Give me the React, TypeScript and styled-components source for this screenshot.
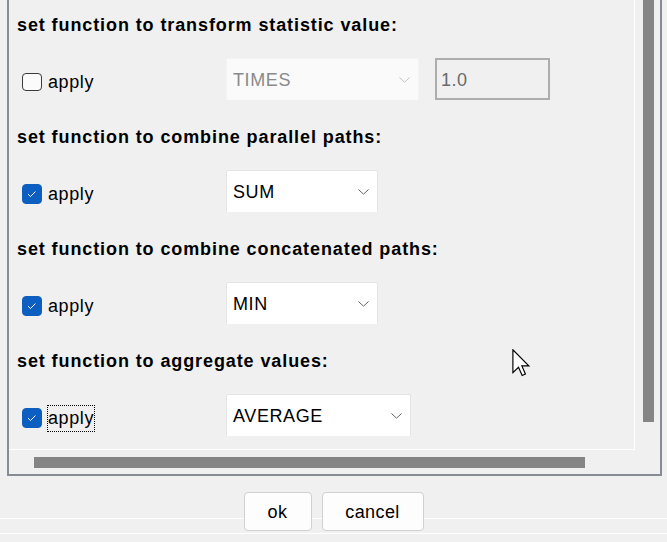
import React from "react";
import styled, { createGlobalStyle } from "styled-components";

const Global = createGlobalStyle`
  html, body { margin: 0; padding: 0; background: #f0f0f0; }
  body { font-family: "Liberation Sans", Arial, sans-serif; overflow: hidden; }
  * { box-sizing: border-box; }
`;

const Page = styled.div`
  width: 667px;
  height: 542px;
  display: flex;
  flex-direction: column;
  background: #f0f0f0;
  position: relative;
`;

const ScrollBox = styled.div`
  margin: 0 5px 0 7px;
  height: 476px;
  border: 2px solid #878b94;
  border-top: none;
  display: grid;
  grid-template-columns: 626px 25px;
  grid-template-rows: 450px 24px;
`;

const Viewport = styled.div`
  border-right: 1px solid #ffffff;
  border-bottom: 1px solid #ffffff;
  padding: 14px 0 0 8px;
  display: flex;
  flex-direction: column;
  gap: 26px;
  overflow: hidden;
`;

const Section = styled.div`
  display: flex;
  flex-direction: column;
  gap: 22px;
`;

const Title = styled.div`
  font-weight: bold;
  font-size: 18px;
  line-height: 22px;
  letter-spacing: 0.9px;
  color: #000;
  white-space: nowrap;
`;

const Row = styled.div`
  display: flex;
  align-items: center;
  height: 42px;
  padding-left: 5px;
`;

const CheckCell = styled.div`
  width: 204px;
  display: flex;
  align-items: center;
  gap: 5px;
  margin-top: 6px;
`;

const Box = styled.div<{ $checked: boolean }>`
  width: 20px;
  height: ${(p) => (p.$checked ? 20 : 18)}px;
  border-radius: 4px;
  display: flex;
  align-items: center;
  justify-content: center;
  background: ${(p) => (p.$checked ? "#0c5fc1" : "#fbfbfb")};
  border: 1px solid ${(p) => (p.$checked ? "#0c5fc1" : "#3a3a3a")};
`;

const Label = styled.span<{ $focused?: boolean }>`
  font-size: 18px;
  line-height: 25px;
  letter-spacing: 0.6px;
  color: #000;
  border: 1px ${(p) => (p.$focused ? "dotted #000" : "solid transparent")};
`;

const Combo = styled.div<{ $w: number; $disabled?: boolean }>`
  width: ${(p) => p.$w}px;
  height: 42px;
  background: ${(p) => (p.$disabled ? "#fafafa" : "#ffffff")};
  border: 1px solid ${(p) => (p.$disabled ? "#f4f4f4" : "#e4e4e4")};
  border-bottom-color: ${(p) => (p.$disabled ? "#fafafa" : "#ffffff")};
  border-radius: 2px;
  display: flex;
  align-items: center;
  justify-content: space-between;
  padding: 2px 8px 0 6px;
  font-size: 18px;
  letter-spacing: 0.6px;
  color: ${(p) => (p.$disabled ? "#8a8a8a" : "#000")};
`;

const Field = styled.div`
  width: 115px;
  height: 42px;
  margin-left: 16px;
  border: 2px solid #adadad;
  display: flex;
  align-items: center;
  padding: 2px 0 0 4px;
  font-size: 18px;
  letter-spacing: 0.5px;
  color: #6a6a6a;
`;

const VTrack = styled.div`
  display: flex;
  justify-content: center;
  padding-left: 1px;
`;

const VThumb = styled.div`
  width: 11px;
  height: 422px;
  background: #858585;
`;

const HTrack = styled.div`
  display: flex;
  align-items: center;
  padding-left: 25px;
  padding-top: 1px;
`;

const HThumb = styled.div`
  width: 551px;
  height: 11px;
  background: #858585;
`;

const Footer = styled.div`
  flex: 1;
  display: flex;
  justify-content: center;
  align-items: flex-start;
  gap: 10px;
  padding-top: 16px;
  background-image: linear-gradient(#ffffff, #ffffff), linear-gradient(#ffffff, #ffffff);
  background-size: 100% 1px, 100% 1px;
  background-position: 0 42px, 0 57px;
  background-repeat: no-repeat;
`;

const Button = styled.div<{ $w: number }>`
  width: ${(p) => p.$w}px;
  height: 39px;
  background: #fdfdfd;
  border: 1px solid #d0d0d0;
  border-radius: 4px;
  display: flex;
  align-items: center;
  justify-content: center;
  padding-top: 1px;
  font-size: 18px;
  letter-spacing: 0.4px;
  color: #000;
  position: relative;
`;

const Cursor = styled.svg`
  position: absolute;
  left: 512px;
  top: 349px;
`;

const Chevron = ({ color }: { color: string }) => (
  <svg width="11" height="6" viewBox="0 0 11 6">
    <polyline points="0.5,0.5 5.5,5.2 10.5,0.5" fill="none" stroke={color} strokeWidth="1" />
  </svg>
);

const Check = ({ checked, focused }: { checked: boolean; focused?: boolean }) => (
  <CheckCell>
    <Box $checked={checked}>
      {checked && (
        <svg width="20" height="20" viewBox="0 0 20 20">
          <polyline points="5.5,10 8.3,12.8 13.8,7.3" fill="none" stroke="#ffffff" strokeWidth="1.1" />
        </svg>
      )}
    </Box>
    <Label $focused={focused}>apply</Label>
  </CheckCell>
);

export default function App() {
  return (
    <Page>
      <Global />
      <ScrollBox>
        <Viewport>
          <Section>
            <Title>set function to transform statistic value:</Title>
            <Row>
              <Check checked={false} />
              <Combo $w={193} $disabled>
                TIMES <Chevron color="#c2c2c2" />
              </Combo>
              <Field>1.0</Field>
            </Row>
          </Section>
          <Section>
            <Title>set function to combine parallel paths:</Title>
            <Row>
              <Check checked />
              <Combo $w={152}>
                SUM <Chevron color="#606060" />
              </Combo>
            </Row>
          </Section>
          <Section>
            <Title>set function to combine concatenated paths:</Title>
            <Row>
              <Check checked />
              <Combo $w={152}>
                MIN <Chevron color="#606060" />
              </Combo>
            </Row>
          </Section>
          <Section>
            <Title>set function to aggregate values:</Title>
            <Row>
              <Check checked focused />
              <Combo $w={185}>
                AVERAGE <Chevron color="#606060" />
              </Combo>
            </Row>
          </Section>
        </Viewport>
        <VTrack>
          <VThumb />
        </VTrack>
        <HTrack>
          <HThumb />
        </HTrack>
        <div />
      </ScrollBox>
      <Footer>
        <Button $w={68}>ok</Button>
        <Button $w={102}>cancel</Button>
      </Footer>
      <Cursor width="18" height="28" viewBox="0 0 12 19">
        <path d="M0.5,0.5 L0.5,16 L4.3,12.4 L6.8,18 L9,17 L6.6,11.5 L11.3,11.5 Z" fill="#ffffff" stroke="#000000" strokeWidth="0.8" strokeLinejoin="miter" />
      </Cursor>
    </Page>
  );
}
